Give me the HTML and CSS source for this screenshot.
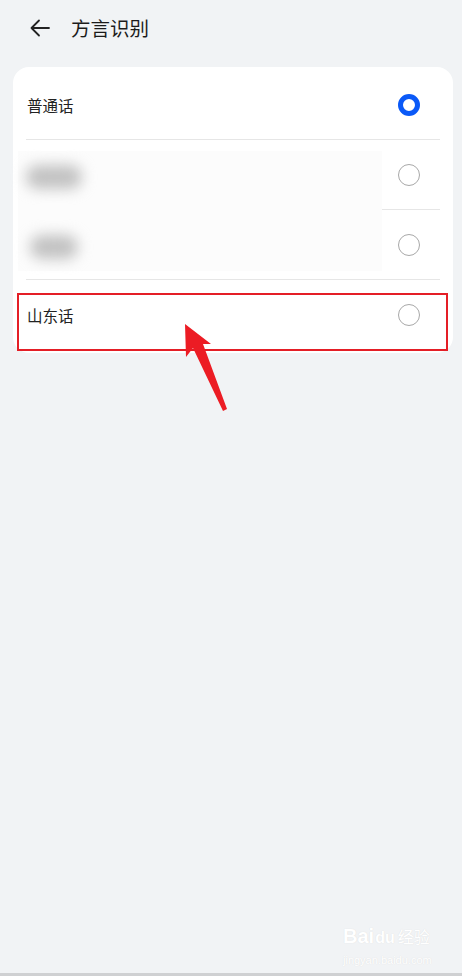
FILE: index.html
```html
<!DOCTYPE html>
<html lang="zh">
<head>
<meta charset="utf-8">
<title>方言识别</title>
<link rel="stylesheet" href="styles.css">
</head>
<body>
<div class="screen">
  <header class="topbar">
    <svg class="back" width="24" height="24" viewBox="0 0 24 24" aria-hidden="true">
      <path d="M21 12H3.5M11 4.5L3.5 12L11 19.5" fill="none" stroke="#222" stroke-width="1.8" stroke-linecap="round" stroke-linejoin="round"/>
    </svg>
    <h1 class="title">方言识别</h1>
  </header>

  <section class="card">
    <div class="row">
      <span class="label">普通话</span>
      <span class="radio radio-on"></span>
    </div>
    <div class="row">
      <span class="label"></span>
      <span class="radio"></span>
    </div>
    <div class="row">
      <span class="label"></span>
      <span class="radio"></span>
    </div>
    <div class="row">
      <span class="label">山东话</span>
      <span class="radio"></span>
    </div>

    <div class="blurred">
      <div class="blob blob-a"></div>
      <div class="blob blob-b"></div>
    </div>
  </section>

  <div class="highlight"></div>
  <svg class="arrow" width="50" height="95" viewBox="0 0 50 95" aria-hidden="true">
    <polygon points="5,4 31,24 23,24 47,89 43,91 13,28 6,37" fill="#ec1c24"/>
  </svg>

  <div class="watermark">
    <div class="wm-logo"><span>Bai</span><span class="paw">du</span><span class="wm-cn">经验</span></div>
    <div class="wm-url">jingyan.baidu.com</div>
  </div>
</div>
</body>
</html>
```

FILE: styles.css
```css
* { box-sizing: border-box; }
html, body { margin: 0; padding: 0; }
body {
  background: #f1f3f5;
  font-family: "Noto Sans CJK SC", "Noto Sans", sans-serif;
  color: #191919;
}
.screen {
  position: relative;
  width: 462px;
  height: 976px;
  overflow: hidden;
  border-bottom: 3px solid #cfd0d2;
}
.topbar {
  display: flex;
  align-items: center;
  height: 55px;
  padding-left: 28px;
}
.back { display: block; }
.title {
  margin: 0 0 0 19px;
  font-size: 19.5px;
  font-weight: 400;
  color: #1b1b1b;
  letter-spacing: 0;
}
.card {
  position: relative;
  margin: 12px 9px 0 13px;
  background: #fff;
  border-radius: 16px;
  padding: 4px 13px 3px;
}
.row {
  display: flex;
  align-items: center;
  justify-content: space-between;
  height: 70px;
  padding: 0 20px 0 1px;
  border-bottom: 1px solid #e6e6e6;
}
.row:first-child { height: 69px; }
.row:last-of-type { border-bottom: none; }
.label {
  font-size: 15.5px;
  color: #222;
}
.radio {
  width: 22px;
  height: 22px;
  border-radius: 50%;
  border: 1.2px solid #a8a8a8;
  background: #fff;
}
.radio-on {
  border: 5.5px solid #0a59f7;
}
.blurred {
  position: absolute;
  left: 5px;
  top: 84px;
  width: 364px;
  height: 120px;
  background: #fcfcfc;
}
.blob {
  position: absolute;
  background: #c2c2c2;
  border-radius: 14px;
  filter: blur(7px);
}
.blob-a { left: 8px; top: 14px; width: 56px; height: 24px; }
.blob-b { left: 12px; top: 84px; width: 48px; height: 24px; }
.highlight {
  position: absolute;
  left: 17px;
  top: 293px;
  width: 431px;
  height: 58px;
  border: 2px solid #e41e26;
}
.arrow {
  position: absolute;
  left: 180px;
  top: 320px;
}
.watermark {
  position: absolute;
  left: 343px;
  top: 924px;
  color: #fff;
  text-shadow: 0 0 1px #d8d8d8;
  font-family: "Liberation Sans", sans-serif;
  text-align: center;
}
.wm-logo {
  display: flex;
  align-items: baseline;
  font-size: 20px;
  font-weight: 700;
  line-height: 24px;
}
.paw {
  font-size: 16px;
  margin-left: 1px;
}
.wm-cn {
  font-family: "Noto Sans CJK SC", sans-serif;
  font-size: 16px;
  font-weight: 400;
  margin-left: 3px;
}
.wm-url {
  font-size: 11px;
  line-height: 14px;
  margin-top: 3px;
}
```
